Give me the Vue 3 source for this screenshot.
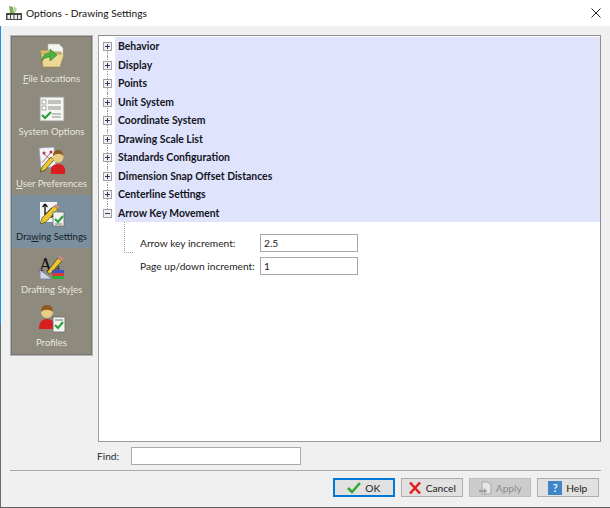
<script setup>
const nav = [
  { key: 'file', pre: '', u: 'F', post: 'ile Locations' },
  { key: 'system', pre: 'System Options', u: '', post: '' },
  { key: 'user', pre: '', u: 'U', post: 'ser Preferences' },
  { key: 'drawing', pre: 'Dra', u: 'w', post: 'ing Settings', active: true },
  { key: 'styles', pre: 'Drafting Sty', u: 'l', post: 'es' },
  { key: 'profiles', pre: 'Profiles', u: '', post: '' }
]
const rows = ['Behavior', 'Display', 'Points', 'Unit System', 'Coordinate System', 'Drawing Scale List', 'Standards Configuration', 'Dimension Snap Offset Distances', 'Centerline Settings']
</script>

<template>
  <div class="win">
    <header class="title">
      <svg class="appicon" width="16" height="16" viewBox="0 0 16 16">
        <path d="M3 1l4 1 1 6H4z" fill="#7fae5a" />
        <path d="M8 1l3 3-2 4H8z" fill="#b9d4a0" />
        <rect x="0" y="8" width="16" height="7" fill="#4a4640" />
        <rect x="1.500" y="10" width="2.500" height="4" fill="#eee" />
        <rect x="5" y="10" width="2.500" height="4" fill="#eee" />
        <rect x="8.500" y="10" width="2.500" height="4" fill="#eee" />
        <rect x="12" y="10" width="2.500" height="4" fill="#eee" />
      </svg>
      <span class="title-text">Options - Drawing Settings</span>
      <svg class="close" width="10" height="10" viewBox="0 0 10 10"><path d="M.5.5l9 9M9.500.5l-9 9" stroke="#222" stroke-width="1" fill="none" /></svg>
    </header>

    <main class="body">
      <div class="content">
        <nav class="nav">
          <div v-for="n in nav" :key="n.key" class="nav-item" :class="{ active: n.active }">
            <svg v-if="n.key === 'file'" class="nav-icon" width="26" height="26" viewBox="0 0 26 26">
              <path d="M9 1h11l4 4v10H9z" fill="#f4f4f0" stroke="#b5b5ae" stroke-width=".6" />
              <path d="M1 7h8l2 2h11l-2 15H4z" fill="#d9bc72" stroke="#8d7a45" stroke-width=".6" />
              <path d="M2 11h23l-4 13H4z" fill="#ecd795" stroke="#9a8650" stroke-width=".6" />
              <path d="M3 18c0-5 3-8 8-8V6l7 6-7 6v-4c-3 0-6 1-8 4z" fill="#48b63e" stroke="#2c7a28" stroke-width=".6" />
            </svg>
            <svg v-else-if="n.key === 'system'" class="nav-icon" width="26" height="26" viewBox="0 0 26 26">
              <rect x="1" y="1" width="24" height="24" fill="#f6f6f3" stroke="#9a9a96" />
              <rect x="3" y="4" width="4" height="4" fill="#fff" stroke="#888" stroke-width=".7" />
              <rect x="3" y="10" width="4" height="4" fill="#fff" stroke="#888" stroke-width=".7" />
              <path d="M9 5h13M9 7h13M9 11h13M9 13h13M13 18h9M13 21h9" stroke="#8e8e8e" stroke-width="1" />
              <path d="M3 19l3 3 6-6" stroke="#28a03a" stroke-width="2.200" fill="none" />
            </svg>
            <svg v-else-if="n.key === 'user'" class="nav-icon" width="28" height="28" viewBox="0 0 28 28">
              <path d="M1 2l15-1 2 19-15 3z" fill="#f3f3f6" stroke="#8d9ab6" stroke-width=".8" />
              <path d="M4 17L14 5M5 7l10 9" stroke="#b96a7a" stroke-width="1" />
              <circle cx="6" cy="7" r="1.500" fill="#b5324a" />
              <circle cx="13" cy="6" r="1.500" fill="#b5324a" />
              <path d="M2 26l2-5L13 11l3 3-9 10z" fill="#eec62e" stroke="#3a3a22" stroke-width=".7" />
              <path d="M13 28c-1-7 2-10 7-10s8 3 7 10z" fill="#d81e1e" />
              <circle cx="20" cy="11" r="5.500" fill="#e8cd86" />
              <path d="M15 10c0-5 3-6 5-6s5 1 5 6c-2-3-7-3-10 0z" fill="#8d5a1f" />
            </svg>
            <svg v-else-if="n.key === 'drawing'" class="nav-icon" width="26" height="26" viewBox="0 0 26 26">
              <rect x="1" y="1" width="17" height="20" fill="#f4f4f4" />
              <path d="M6 3v11h9M6 3L3.500 6M6 3l2.500 3M15 14l-3-2.500M15 14l-3 2.500M6 14l7-7" stroke="#111" stroke-width="1.300" fill="none" />
              <path d="M1 23l2-6L15 5l4 3L7 21z" fill="#eec62e" stroke="#4a4a2a" stroke-width=".7" />
              <path d="M15 5l2-2 4 3-2 2z" fill="#d88888" />
              <rect x="14" y="11" width="11" height="14" fill="#f2f2ee" stroke="#6c6c66" stroke-width=".8" />
              <path d="M16 18l3 3 5-6" stroke="#28a03a" stroke-width="2" fill="none" />
              <path d="M16 23h7" stroke="#777" stroke-width="1" />
            </svg>
            <svg v-else-if="n.key === 'styles'" class="nav-icon" width="26" height="25" viewBox="0 0 26 25">
              <text x="0" y="16" class="glyph-a">A</text>
              <text x="16" y="16" class="glyph-b">a</text>
              <path d="M1 15v9h12z" fill="#cfd6e4" stroke="#7c86a0" stroke-width=".9" />
              <path d="M8 17L19 3l4 3-12 13z" fill="#eec62e" stroke="#3a3a22" stroke-width=".7" />
              <path d="M19 3l2-2 4 3-2 2z" fill="#d88888" />
              <rect x="13" y="15" width="12" height="3" fill="#3d55c4" />
              <rect x="13" y="18" width="12" height="3" fill="#d8383a" />
              <rect x="13" y="21" width="12" height="3" fill="#2cae3a" />
            </svg>
            <svg v-else class="nav-icon" width="28" height="29" viewBox="0 0 28 29">
              <path d="M1 25c0-7 3-10 8-10s8 3 8 10z" fill="#d81e1e" />
              <circle cx="9" cy="8" r="6" fill="#e8cd86" />
              <path d="M3 8c0-6 3-7 6-7s6 1 6 7c-3-3-9-3-12 0z" fill="#8d5a1f" />
              <rect x="15" y="13" width="12" height="15" fill="#f2f2ee" stroke="#6c6c66" stroke-width=".8" />
              <path d="M17 21l3 3 5-6" stroke="#28a03a" stroke-width="2" fill="none" />
              <path d="M17 16h8" stroke="#777" stroke-width="1" />
            </svg>
            <span class="nav-label">{{ n.pre }}<u v-if="n.u">{{ n.u }}</u>{{ n.post }}</span>
          </div>
        </nav>

        <section class="tree">
          <div v-for="(r, i) in rows" :key="r" class="row">
            <span class="gutter"><span class="line" :class="{ first: i === 0 }"></span><span class="box plus"></span></span>
            <span class="row-label">{{ r }}</span>
          </div>
          <div class="row">
            <span class="gutter"><span class="line last"></span><span class="box minus"></span></span>
            <span class="row-label">Arrow Key Movement</span>
          </div>
          <div class="children">
            <span class="elbow"></span>
            <div class="fields">
              <label class="field"><span class="field-label">Arrow key increment:</span><input class="input" value="2.5" /></label>
              <label class="field"><span class="field-label">Page up/down increment:</span><input class="input" value="1" /></label>
            </div>
          </div>
        </section>
      </div>

      <div class="find">
        <span class="find-label">Find:</span>
        <input class="find-input" />
      </div>

      <div class="footer">
        <button class="btn primary">
          <svg width="14" height="12" viewBox="0 0 14 12"><path d="M1 6l4 4 8-9" stroke="#2fa82f" stroke-width="2.500" fill="none" /></svg>
          OK
        </button>
        <button class="btn">
          <svg width="14" height="14" viewBox="0 0 14 14"><path d="M2 1.500l10 11M12 1.500l-10 11" stroke="#e02020" stroke-width="2.600" fill="none" /></svg>
          Cancel
        </button>
        <button class="btn disabled" disabled>
          <svg width="14" height="14" viewBox="0 0 14 14"><path d="M4 1h6l3 3v9H4z" fill="#e6e6e6" stroke="#a8a8a8" /><path d="M1 9h5V7l3 3-3 3v-2H1z" fill="#9c9c9c" /></svg>
          Apply
        </button>
        <button class="btn">
          <span class="help">?</span>
          Help
        </button>
      </div>
    </main>
  </div>
</template>

<style>
html, body { margin: 0; background: #f0f0f0; }
</style>

<style scoped>
.win {
  width: 610px;
  height: 508px;
  box-sizing: border-box;
  display: flex;
  flex-direction: column;
  padding-left: 1px;
  background: linear-gradient(#1e90e8, #1e90e8) 0 0 / 1px 325px no-repeat, linear-gradient(#6a6a6a, #6a6a6a) 0 0 / 1px 100% no-repeat;
  border-bottom: 1px solid #5f5f5f;
  font-family: Lato, "Open Sans", sans-serif;
  font-size: 10.200px;
  color: #222;
  overflow: hidden;
}
.title {
  height: 26px;
  flex: none;
  background: #fff;
  display: flex;
  align-items: center;
  padding: 0 5px 0 6px;
  margin-left: -1px;
  font-size: 10.200px;
  color: #111;
}
.appicon { margin-right: 4px; }
.title-text { flex: 1; }
.close { margin-right: 4px; }
.body { flex: 1; background: #f0f0f0; display: flex; flex-direction: column; padding: 9px 9px 0 9px; }
.content { display: flex; gap: 5px; height: 407px; }
.nav {
  width: 83px;
  height: 321px;
  box-sizing: border-box;
  background: #8e8a7d;
  border: 1px solid #b4b4b8;
  box-shadow: inset 0 0 0 1px #77756c;
  padding: 1px;
  display: flex;
  flex-direction: column;
  flex: none;
}
.nav-item {
  flex: 1;
  display: flex;
  flex-direction: column;
  align-items: center;
  justify-content: flex-end;
  padding-bottom: 4px;
  color: #e9e7df;
  box-sizing: border-box;
}
.nav-item.active { background: #7a909e; color: #16202a; }
.nav-icon { margin-bottom: 3px; display: block; }
.nav-label { white-space: nowrap; font-size: 9.500px; line-height: 14px; }
.glyph-a { font: 18px "Liberation Serif", serif; fill: #111; }
.glyph-b { font: 11px "Liberation Serif", serif; fill: #111; }

.tree {
  flex: 1;
  background: #fff;
  border: 1px solid;
  border-color: #8f8f8f #8f8f8f #9a9a9a #a0a0a0;
  box-sizing: border-box;
  padding-top: 1px;
}
.row { height: 18.500px; display: flex; align-items: center; }
.gutter { width: 16px; height: 100%; position: relative; flex: none; }
.line {
  position: absolute;
  left: 8px;
  top: 0;
  bottom: 0;
  border-left: 1px dotted #9a9a9a;
}
.line.first { top: 9px; }
.line.last { bottom: 9px; }
.box {
  position: absolute;
  left: 4px;
  top: 5px;
  width: 7px;
  height: 7px;
  border: 1px solid #a0a0a0;
  background: #f0f0f0 linear-gradient(#2a3a66, #2a3a66) center / 5px 1px no-repeat;
}
.box.plus {
  background:
    linear-gradient(#2a3a66, #2a3a66) center / 5px 1px no-repeat,
    linear-gradient(#2a3a66, #2a3a66) center / 1px 5px no-repeat,
    #f0f0f0;
}
.row-label {
  flex: 1;
  align-self: stretch;
  background: #dfe3fb;
  padding-left: 3px;
  line-height: 18.500px;
  font-size: 10.400px;
  font-weight: 700;
  color: #14141e;
}
.children { position: relative; padding-left: 41px; padding-top: 12px; }
.elbow {
  position: absolute;
  left: 25px;
  top: 0;
  width: 8px;
  height: 30px;
  border-left: 1px dotted #a0a0a0;
  border-bottom: 1px dotted #a0a0a0;
}
.fields { display: flex; flex-direction: column; gap: 5px; }
.field { display: flex; align-items: center; }
.field-label { width: 120px; color: #1d1d1d; white-space: nowrap; }
.input {
  width: 98px;
  height: 18px;
  box-sizing: border-box;
  border: 1px solid #a8a8a8;
  background: #fff;
  padding: 0 3px;
  font: inherit;
  color: #222;
  outline: none;
}
.find { display: flex; align-items: center; height: 18px; margin-top: 5px; padding-left: 87px; }
.find-label { width: 34px; color: #2a2a3a; }
.find-input { width: 170px; height: 18px; box-sizing: border-box; border: 1px solid #a8a8a8; background: #fff; outline: none; }
.footer {
  margin-top: 5px;
  border-top: 1px solid #a8a8a8;
  padding: 7px 0 0 323px;
  display: flex;
  gap: 6.500px;
}
.btn {
  width: 61.500px;
  height: 19px;
  box-sizing: border-box;
  border: 1px solid #adadad;
  background: #e1e1e1;
  font: inherit;
  color: #222;
  display: flex;
  align-items: center;
  justify-content: center;
  gap: 4px;
  padding: 0;
}
.btn.primary { border: 1px solid #0078d7; box-shadow: inset 0 0 0 1px #0078d7; }
.btn.disabled { background: #cccccc; border-color: #bfbfbf; color: #8c8c8c; }
.help {
  width: 14px;
  height: 14px;
  background: #3f86c9;
  color: #fff;
  font-size: 11px;
  line-height: 14px;
  text-align: center;
  font-weight: 600;
}
</style>
